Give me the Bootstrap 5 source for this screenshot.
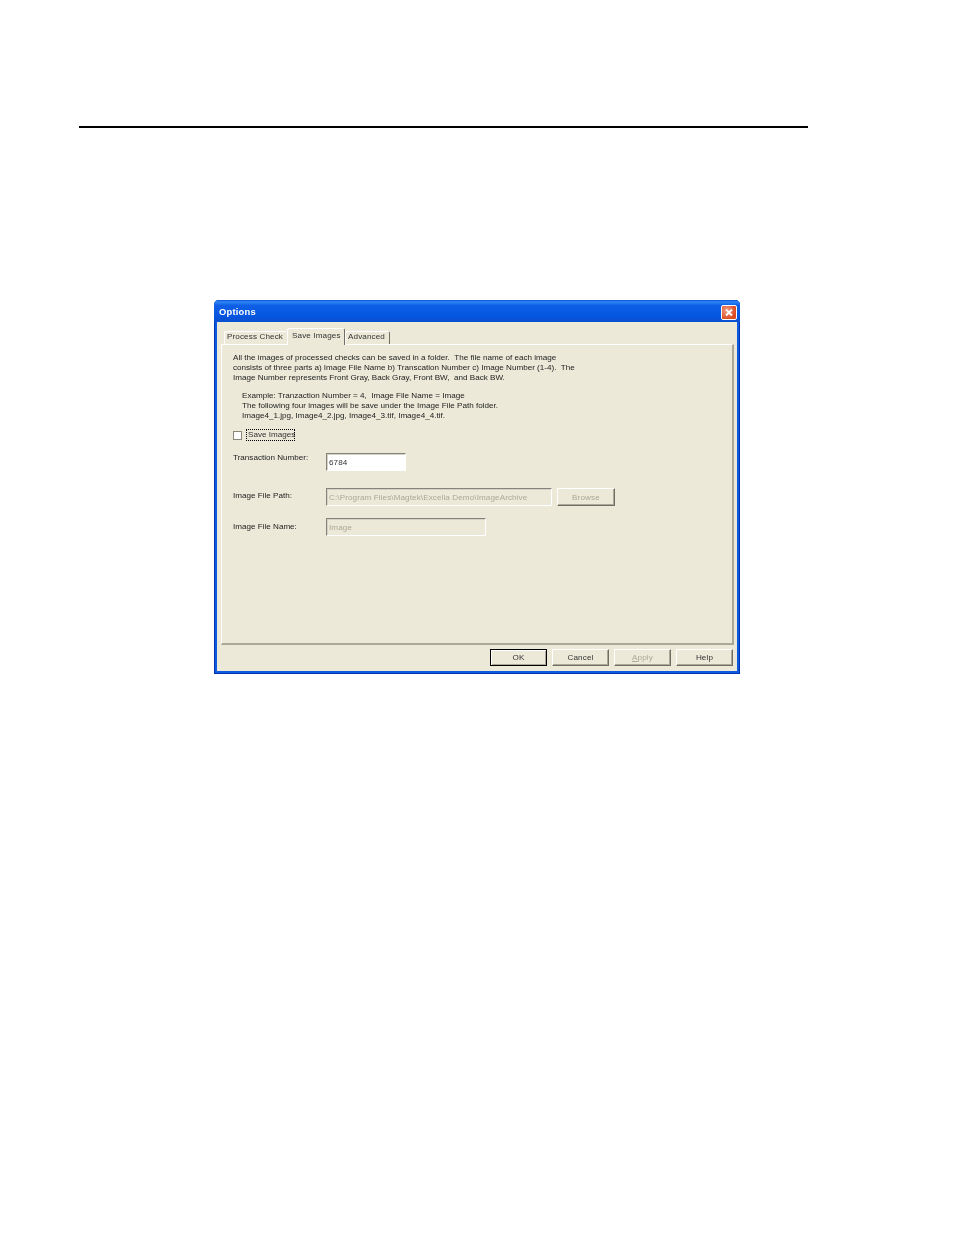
<!DOCTYPE html>
<html lang="en"><head><meta charset="utf-8"><title>Options</title>
<link href="https://cdn.jsdelivr.net/npm/bootstrap@5.3.0/dist/css/bootstrap.min.css" rel="stylesheet">
<style>
html,body{background:#fff;margin:0;}
body{font-family:"Liberation Sans",Arial,sans-serif;font-size:8.1px;line-height:10.2px;color:#222;}
.pg-rule{width:729px;height:2px;background:#000;margin:126px 0 0 79px;}
.xp-win{width:526px;height:374px;margin:172px 0 0 214px;background:#0a5be0;border-radius:5px 5px 0 0;padding:0 3px 3px;box-shadow:inset 0 -1px 0 #0033b0,inset 1px 0 0 #0033b0,inset -1px 0 0 #0033b0;}
.xp-title{height:22px;margin:0 -3px;padding:2px 3px 0 5px;border-radius:5px 5px 0 0;background:linear-gradient(#0a4fd8 0,#2e86f5 8%,#0f5fe6 25%,#0556e0 70%,#0a4fd0 100%);color:#fff;font-weight:700;font-size:9.4px;letter-spacing:.2px;}
.xp-close{width:16px;height:15px;border:1px solid #fff;border-radius:2px;background:radial-gradient(circle at 35% 35%,#f0a088,#dc4b22 70%);}
.xp-close svg{display:block;}
.xp-body{height:349px;background:#ece9d8;padding:6px 3px 0 4px;}
.xp-tabs{height:16px;padding-left:3px;flex-wrap:nowrap;}
.xp-tab{height:13px;margin-top:3px;padding:1px 0 0 3px;line-height:10px;white-space:nowrap;background:#ece9d8;box-shadow:inset 1px 1px 0 #fff;letter-spacing:.12px;color:#333;border-radius:2px 2px 0 0;}
.xp-tab.xp-on{height:17px;margin-top:0;padding:3px 0 0 5px;position:relative;z-index:1;box-shadow:inset 1px 1px 0 #fff,inset -1px 0 0 #716f64;}
.xp-tab.xp-end{box-shadow:inset 1px 1px 0 #fff,inset -1px 0 0 #716f64;}
.xp-t1{width:63px}.xp-t2{width:58px}.xp-t3{width:45px}
.xp-panel{height:301px;border-top:1px solid #fff;border-left:1px solid #fff;border-right:2px solid #aca899;border-bottom:2px solid #aca899;padding:8px 0 0 11px;}
.xp-para{margin:0;white-space:nowrap;color:#222;}
.xp-ind{margin:7px 0 0 9px;}
.xp-chk{margin-top:8px;gap:4px;height:12px;}
.xp-box{width:9px;height:9px;background:#fff;border:1px solid #8a887c;}
.xp-focus{border:1px dotted #000;height:12px;width:49px;line-height:10px;padding-left:1px;white-space:nowrap;color:#333;}
.xp-row{display:flex;align-items:flex-start;}
.xp-lab{width:93px;white-space:nowrap;}
.xp-lab1{padding-top:0}.xp-lab2{padding-top:3px}.xp-lab3{padding-top:4px}
.xp-in{height:18px;padding:0 2px;font-size:8.1px;line-height:14px;border-radius:0;border:1px solid;border-color:#85837a #fff #fff #85837a;background:#fff;color:#333;letter-spacing:.1px;box-shadow:inset 1px 1px 0 #d5d2c5;min-height:0;}
.xp-in:disabled{background:#ece9d8;color:#aca899;opacity:1;}
.xp-w80{width:80px}.xp-w226{width:226px}.xp-w160{width:160px}
.xp-r1{margin-top:12px}.xp-r2{margin-top:17px}.xp-r3{margin-top:12px}
.xp-btn{flex:none;width:57px;height:17px;padding:0;font-size:8.1px;line-height:15px;letter-spacing:.15px;border-radius:0;background:#ece9d8;color:#333;border:1px solid;border-color:#fff #716f64 #716f64 #fff;box-shadow:inset -1px -1px 0 #aca899;}
.xp-btn:disabled{background:#ece9d8;color:#aca899;opacity:1;border-color:#fff #716f64 #716f64 #fff;}
.xp-def{border:1px solid #000;box-shadow:inset 1px 1px 0 #fff,inset -1px -1px 0 #aca899;}
.xp-browse{width:58px;height:18px;margin-left:5px;}
.xp-foot{gap:5px;padding:4px 0 0 269px;}
.xp-blur{filter:blur(.3px);}
</style></head><body>
<div class="pg-rule"></div>
<div class="xp-win">
 <div class="xp-title d-flex align-items-center justify-content-between"><span class="xp-blur">Options</span>
  <span class="xp-close"><svg width="14" height="13" viewBox="0 0 14 13"><path d="M4 3.5 10 9.5M10 3.5 4 9.5" stroke="#fff" stroke-width="1.8" fill="none"/></svg></span></div>
 <div class="xp-body">
  <div class="xp-tabs d-flex xp-blur">
   <div class="xp-tab xp-t1">Process Check</div>
   <div class="xp-tab xp-on xp-t2">Save Images</div>
   <div class="xp-tab xp-end xp-t3">Advanced</div>
  </div>
  <div class="xp-panel">
   <div class="xp-blur">
   <p class="xp-para">All the images of processed checks can be saved in a folder.&nbsp; The file name of each image<br>consists of three parts a) Image File Name b) Transcation Number c) Image Number (1-4).&nbsp; The<br>Image Number represents Front Gray, Back Gray, Front BW,&nbsp; and Back BW.</p>
   <p class="xp-para xp-ind">Example: Tranzaction Number = 4,&nbsp; Image File Name = Image<br>The following four images will be save under the Image File Path folder.<br>Image4_1.jpg, Image4_2.jpg, Image4_3.tif, Image4_4.tif.</p>
   <div class="d-flex align-items-center xp-chk"><span class="xp-box"></span><span class="xp-focus">Save Images</span></div>
   <div class="xp-row xp-r1"><span class="xp-lab xp-lab1">Transaction Number:</span><input class="form-control xp-in xp-w80" value="6784"></div>
   <div class="xp-row xp-r2"><span class="xp-lab xp-lab2">Image File Path:</span><input class="form-control xp-in xp-w226" disabled value="C:\Program Files\Magtek\Excella Demo\ImageArchive"><button class="btn xp-btn xp-browse" disabled>Browse</button></div>
   <div class="xp-row xp-r3"><span class="xp-lab xp-lab3">Image File Name:</span><input class="form-control xp-in xp-w160" disabled value="Image"></div>
   </div>
  </div>
  <div class="d-flex xp-foot xp-blur">
   <button class="btn xp-btn xp-def">OK</button><button class="btn xp-btn">Cancel</button><button class="btn xp-btn" disabled><u>A</u>pply</button><button class="btn xp-btn">Help</button>
  </div>
 </div>
</div>
<script src="https://cdn.jsdelivr.net/npm/bootstrap@5.3.0/dist/js/bootstrap.bundle.min.js"></script>
</body></html>
